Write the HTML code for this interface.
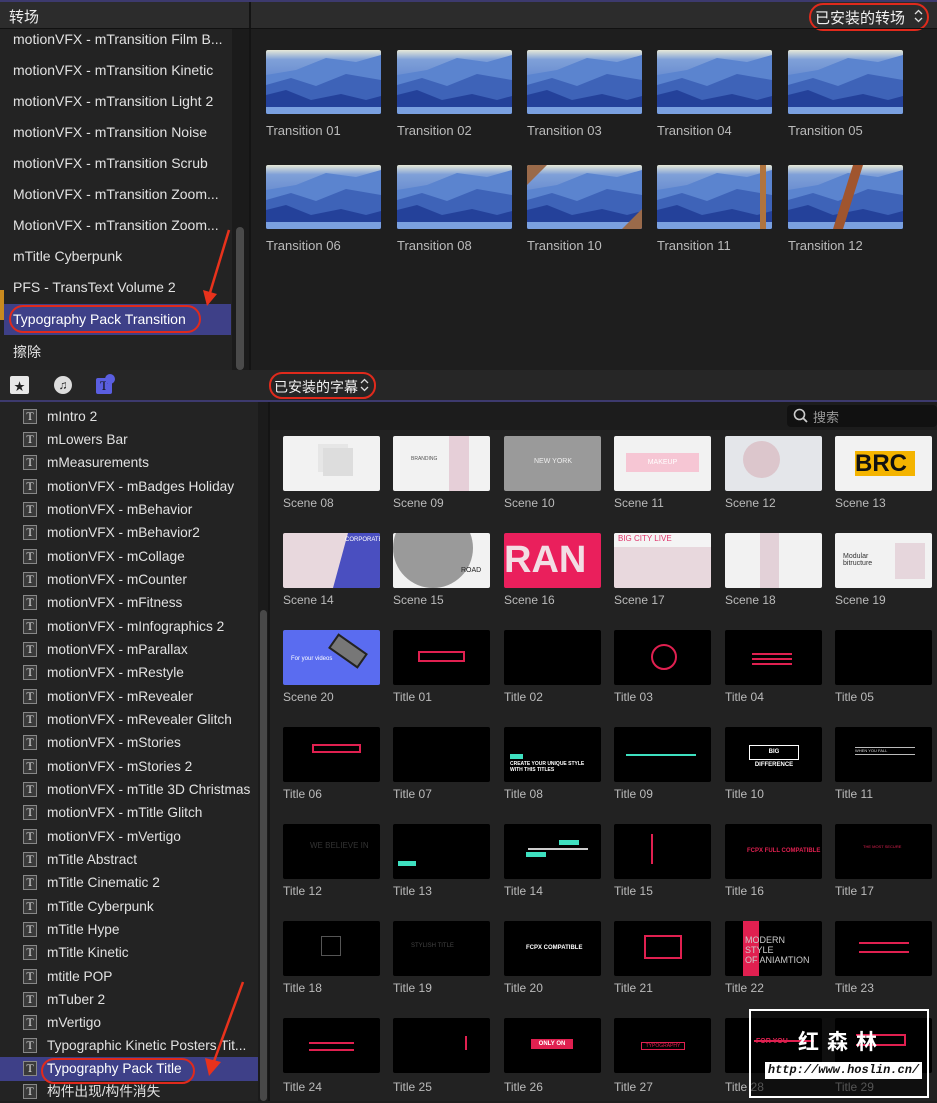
<!DOCTYPE html>
<html><head><meta charset="utf-8">
<style>
*{margin:0;padding:0;box-sizing:border-box}
body{width:937px;height:1101px;background:#1e1e1e;position:relative;overflow:hidden;font-family:"Liberation Sans","Noto Sans CJK SC",sans-serif;color:#ddd}
.a{position:absolute}
.li{position:absolute;left:13px;font-size:14px;color:#e2e2e2;white-space:nowrap}
.bl{position:absolute;left:0;width:258px;height:23px;font-size:13.7px;color:#e2e2e2;white-space:nowrap;line-height:23px}
.bl i{position:absolute;left:23px;top:4px;width:14px;height:15px;border:1px solid #888;background:#3a3a3a;font-style:normal;font-family:"Liberation Serif",serif;font-size:12px;line-height:13px;text-align:center;color:#ddd}
.bl span{position:absolute;left:47px}
.tt{position:absolute;width:115px;height:64px;border-radius:2px;overflow:hidden}
.tl{position:absolute;font-size:13px;color:#bbb}
.th{position:absolute;width:97px;height:55px;border-radius:2px;overflow:hidden;background:#000}
.lb{position:absolute;font-size:12px;color:#bbb}
.w{background:#f2f2f2}
</style></head><body>
<div class="a" style="left:0;top:0;width:937px;height:2px;background:#3d3a6e"></div>
<div class="a" style="left:0;top:2px;width:249px;height:26px;background:#2c2c2c;font-size:15px;padding:4px 9px;color:#eee">转场</div>
<div class="a" style="left:249px;top:2px;width:2px;height:368px;background:#141414"></div>
<div class="a" style="left:251px;top:2px;width:686px;height:26px;background:#2c2c2c"></div>
<div class="a" style="left:809px;top:3px;width:120px;height:28px;border:2px solid #e02a1c;border-radius:14px;font-size:15px;padding:2px 4px;color:#f2f2f2">已安装的转场</div>
<svg class="a" style="left:914px;top:9px" width="9" height="14"><path d="M1 5 L4.5 1.5 L8 5 M1 9 L4.5 12.5 L8 9" stroke="#ddd" stroke-width="1.3" fill="none"/></svg>
<div class="a" style="left:0;top:28px;width:937px;height:1px;background:#111"></div>
<div class="a" style="left:0;top:29px;width:232px;height:341px;background:#232323"></div>
<div class="a" style="left:232px;top:29px;width:17px;height:341px;background:#1b1b1b"></div>
<div class="a" style="left:236px;top:227px;width:8px;height:143px;background:#4a4a4a;border-radius:4px"></div>
<div class="a" style="left:0;top:290px;width:4px;height:30px;background:#c98a1f"></div>
<div class="a" style="left:4px;top:304px;width:227px;height:31px;background:#3e4088"></div>
<div class="li" style="top:31px">motionVFX - mTransition Film B...</div>
<div class="li" style="top:62px">motionVFX - mTransition Kinetic</div>
<div class="li" style="top:93px">motionVFX - mTransition Light 2</div>
<div class="li" style="top:124px">motionVFX - mTransition Noise</div>
<div class="li" style="top:155px">motionVFX - mTransition Scrub</div>
<div class="li" style="top:186px">MotionVFX - mTransition Zoom...</div>
<div class="li" style="top:217px">MotionVFX - mTransition Zoom...</div>
<div class="li" style="top:248px">mTitle Cyberpunk</div>
<div class="li" style="top:279px">PFS - TransText Volume 2</div>
<div class="li" style="top:311px;color:#fff">Typography Pack Transition</div>
<div class="a" style="left:9px;top:305px;width:192px;height:28px;border:2px solid #e02a1c;border-radius:14px"></div>
<div class="li" style="top:342px">擦除</div>
<svg class="a" style="left:195px;top:228px" width="40" height="80"><line x1="34" y1="2" x2="14" y2="68" stroke="#e8321c" stroke-width="2.5"/><polygon points="8,62 12,78 22,66" fill="#e8321c"/></svg>
<svg width="0" height="0" style="position:absolute"><defs>
<linearGradient id="sk" x1="0" y1="0" x2="0" y2="1"><stop offset="0" stop-color="#e6e8d8"/><stop offset=".15" stop-color="#7fa0d8"/><stop offset="1" stop-color="#3d66c0"/></linearGradient>
<symbol id="mt" viewBox="0 0 115 64"><rect width="115" height="64" fill="url(#sk)"/><polygon points="0,25 30,20 60,8 90,12 115,5 115,64 0,64" fill="#5b84cf"/><polygon points="0,35 25,28 50,36 80,24 115,30 115,64 0,64" fill="#3e63b8"/><polygon points="0,45 20,40 45,50 75,44 100,50 115,46 115,64 0,64" fill="#24419a"/><rect y="57" width="115" height="7" fill="#7aa0e0"/></symbol></defs></svg>
<svg class="tt" style="left:266px;top:50px"><use href="#mt"/></svg>
<svg class="tt" style="left:397px;top:50px"><use href="#mt"/></svg>
<svg class="tt" style="left:527px;top:50px"><use href="#mt"/></svg>
<svg class="tt" style="left:657px;top:50px"><use href="#mt"/></svg>
<svg class="tt" style="left:788px;top:50px"><use href="#mt"/></svg>
<div class="tl" style="left:266px;top:123px">Transition 01</div>
<div class="tl" style="left:397px;top:123px">Transition 02</div>
<div class="tl" style="left:527px;top:123px">Transition 03</div>
<div class="tl" style="left:657px;top:123px">Transition 04</div>
<div class="tl" style="left:788px;top:123px">Transition 05</div>
<svg class="tt" style="left:266px;top:165px"><use href="#mt"/></svg>
<svg class="tt" style="left:397px;top:165px"><use href="#mt"/></svg>
<svg class="tt" style="left:527px;top:165px"><use href="#mt"/><polygon points="0,0 20,0 0,20" fill="#9a6a4a"/><polygon points="95,64 115,44 115,64" fill="#9a6a4a"/></svg>
<svg class="tt" style="left:657px;top:165px"><use href="#mt"/><rect x="103" y="0" width="6" height="64" fill="#b0743e"/></svg>
<svg class="tt" style="left:788px;top:165px"><use href="#mt"/><polygon points="45,64 55,64 75,0 65,0" fill="#a0552e"/></svg>
<div class="tl" style="left:266px;top:238px">Transition 06</div>
<div class="tl" style="left:397px;top:238px">Transition 08</div>
<div class="tl" style="left:527px;top:238px">Transition 10</div>
<div class="tl" style="left:657px;top:238px">Transition 11</div>
<div class="tl" style="left:788px;top:238px">Transition 12</div>
<div class="a" style="left:0;top:370px;width:937px;height:31px;background:#262626"></div>
<div class="a" style="left:10px;top:376px;width:19px;height:18px;background:#e8e8e8;border-radius:2px;font-size:11px;color:#222;text-align:center;line-height:22px">★</div>
<div class="a" style="left:54px;top:376px;width:18px;height:18px;border-radius:9px;background:#ddd;color:#222;font-size:12px;text-align:center;line-height:18px">♫</div>
<div class="a" style="left:96px;top:378px;width:16px;height:16px;background:#5a5ee0;border-radius:2px;color:#111;font-family:'Liberation Serif',serif;font-size:13px;text-align:center;line-height:16px">T</div>
<div class="a" style="left:105px;top:374px;width:10px;height:10px;background:#5a5ee0;border-radius:5px"></div>
<div class="a" style="left:269px;top:372px;width:107px;height:27px;border:2px solid #e02a1c;border-radius:13px;font-size:14px;padding:3px 3px;color:#f2f2f2">已安装的字幕</div>
<svg class="a" style="left:360px;top:378px" width="9" height="14"><path d="M1 5 L4.5 1.5 L8 5 M1 9 L4.5 12.5 L8 9" stroke="#ddd" stroke-width="1.3" fill="none"/></svg>
<div class="a" style="left:0;top:400px;width:937px;height:2px;background:#3d3a6e"></div>
<div class="a" style="left:0;top:402px;width:258px;height:699px;background:#232323"></div>
<div class="a" style="left:258px;top:402px;width:10px;height:699px;background:#1b1b1b"></div>
<div class="a" style="left:260px;top:610px;width:7px;height:491px;background:#484848;border-radius:4px"></div>
<div class="a" style="left:268px;top:402px;width:2px;height:699px;background:#141414"></div>
<div class="a" style="left:0;top:1057px;width:258px;height:24px;background:#3e4088"></div>
<div class="bl" style="top:405px"><i>T</i><span>mIntro 2</span></div>
<div class="bl" style="top:428px"><i>T</i><span>mLowers Bar</span></div>
<div class="bl" style="top:451px"><i>T</i><span>mMeasurements</span></div>
<div class="bl" style="top:475px"><i>T</i><span>motionVFX - mBadges Holiday</span></div>
<div class="bl" style="top:498px"><i>T</i><span>motionVFX - mBehavior</span></div>
<div class="bl" style="top:521px"><i>T</i><span>motionVFX - mBehavior2</span></div>
<div class="bl" style="top:545px"><i>T</i><span>motionVFX - mCollage</span></div>
<div class="bl" style="top:568px"><i>T</i><span>motionVFX - mCounter</span></div>
<div class="bl" style="top:591px"><i>T</i><span>motionVFX - mFitness</span></div>
<div class="bl" style="top:615px"><i>T</i><span>motionVFX - mInfographics 2</span></div>
<div class="bl" style="top:638px"><i>T</i><span>motionVFX - mParallax</span></div>
<div class="bl" style="top:661px"><i>T</i><span>motionVFX - mRestyle</span></div>
<div class="bl" style="top:685px"><i>T</i><span>motionVFX - mRevealer</span></div>
<div class="bl" style="top:708px"><i>T</i><span>motionVFX - mRevealer Glitch</span></div>
<div class="bl" style="top:731px"><i>T</i><span>motionVFX - mStories</span></div>
<div class="bl" style="top:755px"><i>T</i><span>motionVFX - mStories 2</span></div>
<div class="bl" style="top:778px"><i>T</i><span>motionVFX - mTitle 3D Christmas</span></div>
<div class="bl" style="top:801px"><i>T</i><span>motionVFX - mTitle Glitch</span></div>
<div class="bl" style="top:825px"><i>T</i><span>motionVFX - mVertigo</span></div>
<div class="bl" style="top:848px"><i>T</i><span>mTitle Abstract</span></div>
<div class="bl" style="top:871px"><i>T</i><span>mTitle Cinematic 2</span></div>
<div class="bl" style="top:895px"><i>T</i><span>mTitle Cyberpunk</span></div>
<div class="bl" style="top:918px"><i>T</i><span>mTitle Hype</span></div>
<div class="bl" style="top:941px"><i>T</i><span>mTitle Kinetic</span></div>
<div class="bl" style="top:965px"><i>T</i><span>mtitle POP</span></div>
<div class="bl" style="top:988px"><i>T</i><span>mTuber 2</span></div>
<div class="bl" style="top:1011px"><i>T</i><span>mVertigo</span></div>
<div class="bl" style="top:1034px"><i>T</i><span>Typographic Kinetic Posters Tit...</span></div>
<div class="bl" style="top:1057px;color:#fff"><i>T</i><span>Typography Pack Title</span></div>
<div class="bl" style="top:1080px"><i>T</i><span>构件出现/构件消失</span></div>
<div class="a" style="left:41px;top:1058px;width:154px;height:26px;border:2px solid #e02a1c;border-radius:13px"></div>
<svg class="a" style="left:195px;top:980px" width="55" height="100"><line x1="48" y1="2" x2="18" y2="84" stroke="#e8321c" stroke-width="2.5"/><polygon points="10,78 14,96 26,82" fill="#e8321c"/></svg>
<div class="a" style="left:270px;top:402px;width:667px;height:28px;background:#1c1c1c"></div>
<div class="a" style="left:270px;top:430px;width:667px;height:671px;background:#222"></div>
<div class="a" style="left:787px;top:405px;width:150px;height:22px;background:#111;border-radius:4px;font-size:13px;color:#999;padding:2px 0 0 26px">搜索</div>
<svg class="a" style="left:793px;top:408px" width="16" height="16"><circle cx="6.5" cy="6.5" r="5" stroke="#ccc" stroke-width="1.6" fill="none"/><line x1="10" y1="10" x2="14" y2="14" stroke="#ccc" stroke-width="1.8"/></svg>

<div class="th w" style="left:283px;top:436px"><div class="a" style="left:40px;top:12px;width:30px;height:28px;background:#ddd;box-shadow:-5px -4px 0 #e6e6e6"></div></div>
<div class="th w" style="left:393px;top:436px"><div class="a" style="left:56px;top:0;width:20px;height:55px;background:#e6cfd8"></div><div class="a" style="left:18px;top:20px;font-size:5px;color:#555">BRANDING</div></div>
<div class="th" style="left:504px;top:436px;background:#9a9a9a"><div class="a" style="left:30px;top:22px;font-size:7px;color:#eee">NEW YORK</div></div>
<div class="th w" style="left:614px;top:436px"><div class="a" style="left:12px;top:17px;width:73px;height:19px;background:#f6c6d4;font-size:7px;color:#fff;text-align:center;line-height:19px">MAKEUP</div></div>
<div class="th" style="left:725px;top:436px;background:#e4e6ea"><div class="a" style="left:18px;top:5px;width:37px;height:37px;border-radius:50%;background:#dcc6cc"></div></div>
<div class="th w" style="left:835px;top:436px"><div class="a" style="left:20px;top:15px;width:60px;height:25px;background:#f4b400;font:bold 24px/25px 'Liberation Sans';color:#111;overflow:hidden">BRC</div></div>
<div class="lb" style="left:283px;top:496px">Scene 08</div><div class="lb" style="left:393px;top:496px">Scene 09</div><div class="lb" style="left:504px;top:496px">Scene 10</div><div class="lb" style="left:614px;top:496px">Scene 11</div><div class="lb" style="left:725px;top:496px">Scene 12</div><div class="lb" style="left:835px;top:496px">Scene 13</div>
<div class="th" style="left:283px;top:533px;background:#e8d8dd"><div class="a" style="left:50px;top:0;width:50px;height:55px;background:#4a4fc0;clip-path:polygon(30% 0,100% 0,100% 100%,0 100%)"></div><div class="a" style="left:62px;top:4px;font-size:6px;color:#fff">CORPORATE</div></div>
<div class="th w" style="left:393px;top:533px"><div class="a" style="left:0;top:-25px;width:80px;height:80px;border-radius:50%;background:#9a9a9a"></div><div class="a" style="left:68px;top:34px;font-size:7px;color:#222">ROAD</div></div>
<div class="th" style="left:504px;top:533px;background:#ea1f5c;font:bold 38px/55px 'Liberation Sans';color:#f2dde4;overflow:hidden">RAN</div>
<div class="th" style="left:614px;top:533px;background:#e8d8dd"><div class="a" style="left:0;top:0;width:97px;height:14px;background:#f4f4f4;font-size:8px;color:#e0336a;padding:1px 4px">BIG CITY LIVE</div></div>
<div class="th w" style="left:725px;top:533px"><div class="a" style="left:35px;top:0;width:19px;height:55px;background:#e3d1d8"></div></div>
<div class="th w" style="left:835px;top:533px"><div class="a" style="left:8px;top:20px;font-size:7px;color:#333">Modular<br>bitructure</div><div class="a" style="left:60px;top:10px;width:30px;height:36px;background:#e6d6dc"></div></div>
<div class="lb" style="left:283px;top:593px">Scene 14</div><div class="lb" style="left:393px;top:593px">Scene 15</div><div class="lb" style="left:504px;top:593px">Scene 16</div><div class="lb" style="left:614px;top:593px">Scene 17</div><div class="lb" style="left:725px;top:593px">Scene 18</div><div class="lb" style="left:835px;top:593px">Scene 19</div>
<div class="th" style="left:283px;top:630px;background:#5a6cf0"><div class="a" style="left:8px;top:26px;font-size:6px;color:#fff">For your videos</div><div class="a" style="left:47px;top:12px;width:36px;height:18px;background:#777;border:2px solid #222;transform:rotate(35deg)"></div></div>
<div class="th" style="left:393px;top:630px"><div class="a" style="left:25px;top:21px;width:47px;height:11px;border:2px solid #e02050"></div></div>
<div class="th" style="left:504px;top:630px"></div>
<div class="th" style="left:614px;top:630px"><div class="a" style="left:37px;top:14px;width:26px;height:26px;border:2px solid #e02050;border-radius:50%"></div></div>
<div class="th" style="left:725px;top:630px"><div class="a" style="left:27px;top:23px;width:40px;height:2px;background:#e02050;box-shadow:0 5px 0 #e02050,0 10px 0 #e02050"></div></div>
<div class="th" style="left:835px;top:630px"></div>
<div class="lb" style="left:283px;top:690px">Scene 20</div><div class="lb" style="left:393px;top:690px">Title 01</div><div class="lb" style="left:504px;top:690px">Title 02</div><div class="lb" style="left:614px;top:690px">Title 03</div><div class="lb" style="left:725px;top:690px">Title 04</div><div class="lb" style="left:835px;top:690px">Title 05</div>
<div class="th" style="left:283px;top:727px"><div class="a" style="left:29px;top:17px;width:49px;height:9px;border:2px solid #e02050"></div></div>
<div class="th" style="left:393px;top:727px"></div>
<div class="th" style="left:504px;top:727px"><div class="a" style="left:6px;top:27px;width:13px;height:5px;background:#3ee0c0"></div><div class="a" style="left:6px;top:34px;font:bold 5px 'Liberation Sans';color:#fff">CREATE YOUR UNIQUE STYLE<br>WITH THIS TITLES</div></div>
<div class="th" style="left:614px;top:727px"><div class="a" style="left:12px;top:27px;width:70px;height:2px;background:#3ee0c0"></div></div>
<div class="th" style="left:725px;top:727px"><div class="a" style="left:24px;top:18px;width:50px;height:15px;border:1px solid #fff;font:bold 6px/13px 'Liberation Sans';color:#fff;text-align:center">BIG DIFFERENCE</div></div>
<div class="th" style="left:835px;top:727px"><div class="a" style="left:20px;top:20px;width:60px;height:8px;border-top:1px solid #bbb;border-bottom:1px solid #bbb;font-size:4px;color:#ddd">WHEN YOU FALL</div></div>
<div class="lb" style="left:283px;top:787px">Title 06</div><div class="lb" style="left:393px;top:787px">Title 07</div><div class="lb" style="left:504px;top:787px">Title 08</div><div class="lb" style="left:614px;top:787px">Title 09</div><div class="lb" style="left:725px;top:787px">Title 10</div><div class="lb" style="left:835px;top:787px">Title 11</div>
<div class="th" style="left:283px;top:824px"><div class="a" style="left:27px;top:17px;font-size:8px;color:#333">WE BELIEVE IN</div></div>
<div class="th" style="left:393px;top:824px"><div class="a" style="left:5px;top:37px;width:18px;height:5px;background:#3ee0c0"></div></div>
<div class="th" style="left:504px;top:824px"><div class="a" style="left:55px;top:16px;width:20px;height:5px;background:#3ee0c0"></div><div class="a" style="left:24px;top:24px;width:60px;height:2px;background:#ccc"></div><div class="a" style="left:22px;top:28px;width:20px;height:5px;background:#3ee0c0"></div></div>
<div class="th" style="left:614px;top:824px"><div class="a" style="left:37px;top:10px;width:2px;height:30px;background:#e02050"></div></div>
<div class="th" style="left:725px;top:824px"><div class="a" style="left:22px;top:24px;font:bold 6px 'Liberation Sans';color:#e02050">FCPX FULL COMPATIBLE</div></div>
<div class="th" style="left:835px;top:824px"><div class="a" style="left:28px;top:20px;font-size:4px;color:#e02050">THE MOST SECURE</div></div>
<div class="lb" style="left:283px;top:884px">Title 12</div><div class="lb" style="left:393px;top:884px">Title 13</div><div class="lb" style="left:504px;top:884px">Title 14</div><div class="lb" style="left:614px;top:884px">Title 15</div><div class="lb" style="left:725px;top:884px">Title 16</div><div class="lb" style="left:835px;top:884px">Title 17</div>
<div class="th" style="left:283px;top:921px"><div class="a" style="left:38px;top:15px;width:20px;height:20px;border:1px solid #555"></div></div>
<div class="th" style="left:393px;top:921px"><div class="a" style="left:18px;top:22px;font-size:6px;color:#444">STYLISH TITLE</div></div>
<div class="th" style="left:504px;top:921px"><div class="a" style="left:22px;top:24px;font:bold 6px 'Liberation Sans';color:#fff">FCPX COMPATIBLE</div></div>
<div class="th" style="left:614px;top:921px"><div class="a" style="left:30px;top:14px;width:38px;height:24px;border:2px solid #e02050"></div></div>
<div class="th" style="left:725px;top:921px"><div class="a" style="left:18px;top:0;width:16px;height:55px;background:#e02050"></div><div class="a" style="left:20px;top:14px;font-size:9px;line-height:10px;color:#ccc">MODERN<br>STYLE<br>OF ANIAMTION</div></div>
<div class="th" style="left:835px;top:921px"><div class="a" style="left:24px;top:21px;width:50px;height:2px;background:#e02050;box-shadow:0 9px 0 #e02050"></div></div>
<div class="lb" style="left:283px;top:981px">Title 18</div><div class="lb" style="left:393px;top:981px">Title 19</div><div class="lb" style="left:504px;top:981px">Title 20</div><div class="lb" style="left:614px;top:981px">Title 21</div><div class="lb" style="left:725px;top:981px">Title 22</div><div class="lb" style="left:835px;top:981px">Title 23</div>
<div class="th" style="left:283px;top:1018px"><div class="a" style="left:26px;top:24px;width:45px;height:2px;background:#e02050;box-shadow:0 7px 0 #e02050"></div></div>
<div class="th" style="left:393px;top:1018px"><div class="a" style="left:72px;top:18px;width:2px;height:14px;background:#e02050"></div></div>
<div class="th" style="left:504px;top:1018px"><div class="a" style="left:27px;top:21px;width:42px;height:10px;background:#e02050;font:bold 6px/10px 'Liberation Sans';color:#fff;text-align:center">ONLY ON</div></div>
<div class="th" style="left:614px;top:1018px"><div class="a" style="left:27px;top:24px;width:44px;height:8px;border:1px solid #e02050;font-size:5px;line-height:6px;color:#e02050;text-align:center">TYPOGRAPHY</div></div>
<div class="th" style="left:725px;top:1018px"></div>
<div class="th" style="left:835px;top:1018px"></div>
<div class="lb" style="left:283px;top:1080px">Title 24</div><div class="lb" style="left:393px;top:1080px">Title 25</div><div class="lb" style="left:504px;top:1080px">Title 26</div><div class="lb" style="left:614px;top:1080px">Title 27</div><div class="lb" style="left:725px;top:1080px">Title 28</div><div class="lb" style="left:835px;top:1080px">Title 29</div>
<div class="a" style="left:749px;top:1009px;width:180px;height:89px;border:2px solid #fff;background:rgba(0,0,0,.55)"></div>
<div class="a" style="left:754px;top:1040px;width:60px;height:2px;background:#e02050"></div>
<div class="a" style="left:756px;top:1038px;font:bold 7px 'Liberation Sans';color:#e02050">FOR YOU</div>
<div class="a" style="left:856px;top:1034px;width:50px;height:12px;border:2px solid #e02050;border-left:none"></div>
<div class="a" style="left:798px;top:1026px;font:bold 21px 'Noto Sans CJK SC',sans-serif;color:#fff;letter-spacing:8px">红森林</div>
<div class="a" style="left:765px;top:1062px;width:157px;height:17px;background:#fff;font:italic bold 12px/17px 'Liberation Mono',monospace;color:#111;text-align:center">http://www.hoslin.cn/</div>
</body></html>
